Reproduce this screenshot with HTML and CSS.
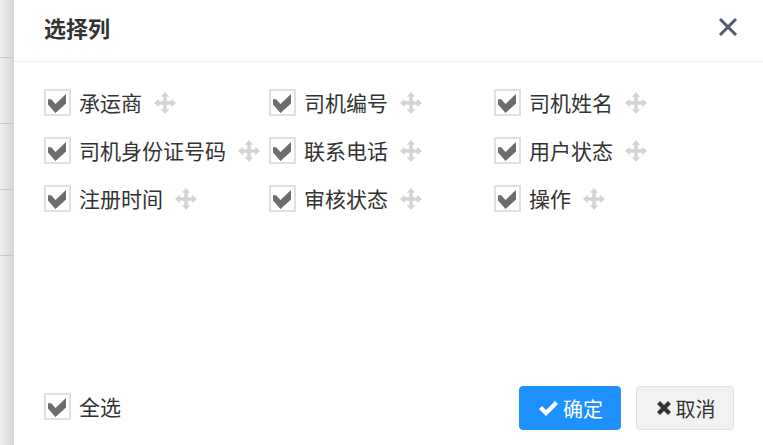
FILE: index.html
```html
<!DOCTYPE html>
<html lang="zh-CN">
<head>
    <meta charset="UTF-8">
    <title>选择列</title>
    <link rel="stylesheet" href="styles.css">
</head>
<body>
    <svg class="sprites" width="0" height="0">
        <symbol id="tick" viewBox="0 0 19 19">
            <path d="M0 5.3 L3.2 5.3 L7.5 10 L18 0 L18 9.5 L7.5 19 L0 10.5 Z"/>
        </symbol>
        <symbol id="move" viewBox="0 0 22 22">
            <path d="M11 0 L15.2 4.8 L12.8 4.8 L12.8 9.2 L17.2 9.2 L17.2 6.8 L22 11 L17.2 15.2 L17.2 12.8 L12.8 12.8 L12.8 17.2 L15.2 17.2 L11 22 L6.8 17.2 L9.2 17.2 L9.2 12.8 L4.8 12.8 L4.8 15.2 L0 11 L4.8 6.8 L4.8 9.2 L9.2 9.2 L9.2 4.8 L6.8 4.8 Z"/>
        </symbol>
    </svg>

    <div class="page">
        <div class="backdrop">
            <div class="bg-row bg-row-first"></div>
            <div class="bg-row"></div>
            <div class="bg-row"></div>
            <div class="bg-row"></div>
        </div>

        <div class="dialog">
            <div class="dialog-head">
                <h2>选择列</h2>
                <svg class="close" width="20" height="20" viewBox="0 0 20 20">
                    <path d="M2 2 L18 18 M18 2 L2 18" stroke="#555a6b" stroke-width="3" fill="none"/>
                </svg>
            </div>

            <div class="dialog-body">
                <div class="col-item"><span class="check"><svg class="tick" width="19" height="19"><use href="#tick"/></svg></span><span class="col-name">承运商</span><svg class="drag" width="22" height="22"><use href="#move"/></svg></div>
                <div class="col-item"><span class="check"><svg class="tick" width="19" height="19"><use href="#tick"/></svg></span><span class="col-name">司机编号</span><svg class="drag" width="22" height="22"><use href="#move"/></svg></div>
                <div class="col-item"><span class="check"><svg class="tick" width="19" height="19"><use href="#tick"/></svg></span><span class="col-name">司机姓名</span><svg class="drag" width="22" height="22"><use href="#move"/></svg></div>
                <div class="col-item"><span class="check"><svg class="tick" width="19" height="19"><use href="#tick"/></svg></span><span class="col-name">司机身份证号码</span><svg class="drag" width="22" height="22"><use href="#move"/></svg></div>
                <div class="col-item"><span class="check"><svg class="tick" width="19" height="19"><use href="#tick"/></svg></span><span class="col-name">联系电话</span><svg class="drag" width="22" height="22"><use href="#move"/></svg></div>
                <div class="col-item"><span class="check"><svg class="tick" width="19" height="19"><use href="#tick"/></svg></span><span class="col-name">用户状态</span><svg class="drag" width="22" height="22"><use href="#move"/></svg></div>
                <div class="col-item"><span class="check"><svg class="tick" width="19" height="19"><use href="#tick"/></svg></span><span class="col-name">注册时间</span><svg class="drag" width="22" height="22"><use href="#move"/></svg></div>
                <div class="col-item"><span class="check"><svg class="tick" width="19" height="19"><use href="#tick"/></svg></span><span class="col-name">审核状态</span><svg class="drag" width="22" height="22"><use href="#move"/></svg></div>
                <div class="col-item"><span class="check"><svg class="tick" width="19" height="19"><use href="#tick"/></svg></span><span class="col-name">操作</span><svg class="drag" width="22" height="22"><use href="#move"/></svg></div>
            </div>

            <div class="dialog-foot">
                <div class="col-item select-all"><span class="check"><svg class="tick" width="19" height="19"><use href="#tick"/></svg></span><span class="col-name">全选</span></div>
                <div class="btns">
                    <button class="btn btn-ok"><svg width="19" height="15" viewBox="0 0 19 15"><path d="M0 8 L3 5 L7 9 L16 0 L19 3 L7 15 Z" fill="#fff"/></svg>确定</button>
                    <button class="btn btn-cancel"><svg width="14" height="14" viewBox="0 0 14 14"><path d="M3 0 L7 4 L11 0 L14 3 L10 7 L14 11 L11 14 L7 10 L3 14 L0 11 L4 7 L0 3 Z" fill="#333"/></svg>取消</button>
                </div>
            </div>
        </div>
    </div>
</body>
</html>
```

FILE: styles.css
```css
* {
    box-sizing: border-box;
}

html, body {
    margin: 0;
    padding: 0;
    height: 100%;
    overflow: hidden;
}

body {
    font-family: "Noto Sans CJK SC", "Liberation Sans", sans-serif;
    color: #333;
    background: #fff;
}

.sprites {
    display: none;
}

.page {
    display: flex;
    width: 763px;
    height: 445px;
}

.backdrop {
    width: 14px;
    flex-shrink: 0;
    background: linear-gradient(to right, #efefef, #d6d6d6);
}

.bg-row {
    height: 66px;
    border-bottom: 1px solid #c9c9c9;
}

.bg-row-first {
    height: 58px;
}

.dialog {
    flex: 1;
    display: flex;
    flex-direction: column;
    background: #fff;
    border-bottom-left-radius: 5px;
}

.dialog-head {
    height: 62px;
    flex-shrink: 0;
    display: flex;
    align-items: center;
    justify-content: space-between;
    padding: 0 25px 8px 30px;
    border-bottom: 1px solid #eeeeee;
}

.dialog-head h2 {
    margin: 0;
    font-size: 22px;
    font-weight: bold;
    color: #333;
}

.dialog-body {
    flex: 1;
    display: grid;
    grid-template-columns: repeat(3, 225px);
    grid-auto-rows: 48px;
    padding: 17px 0 0 30px;
}

.col-item {
    display: flex;
    align-items: center;
    height: 47px;
}

.select-all {
    height: 41px;
}

.check {
    width: 27px;
    height: 27px;
    flex-shrink: 0;
    display: flex;
    align-items: center;
    justify-content: center;
    border: 2px solid #e0e0e0;
    background: #fff;
}

.tick {
    fill: #6d6d6d;
    margin-top: 2px;
}

.col-name {
    margin-left: 8px;
    padding-bottom: 2px;
    font-size: 21px;
    color: #333;
    white-space: nowrap;
}

.drag {
    margin-left: 12px;
    flex-shrink: 0;
    fill: #d3d4d8;
}

.dialog-foot {
    height: 59px;
    flex-shrink: 0;
    display: flex;
    align-items: flex-start;
    justify-content: space-between;
    padding: 0 29px 0 30px;
}

.btns {
    display: flex;
    gap: 15px;
}

.btn {
    height: 44px;
    display: flex;
    align-items: center;
    justify-content: center;
    gap: 5px;
    font-family: inherit;
    font-size: 20px;
    border-radius: 4px;
    padding: 0 0 0 2px;
}

.btn-ok {
    width: 102px;
    color: #fff;
    background: #1e90ff;
    border: 1px solid #1e90ff;
}

.btn-cancel {
    width: 98px;
    color: #333;
    background: #f2f2f2;
    border: 1px solid #e0e0e0;
}
```
